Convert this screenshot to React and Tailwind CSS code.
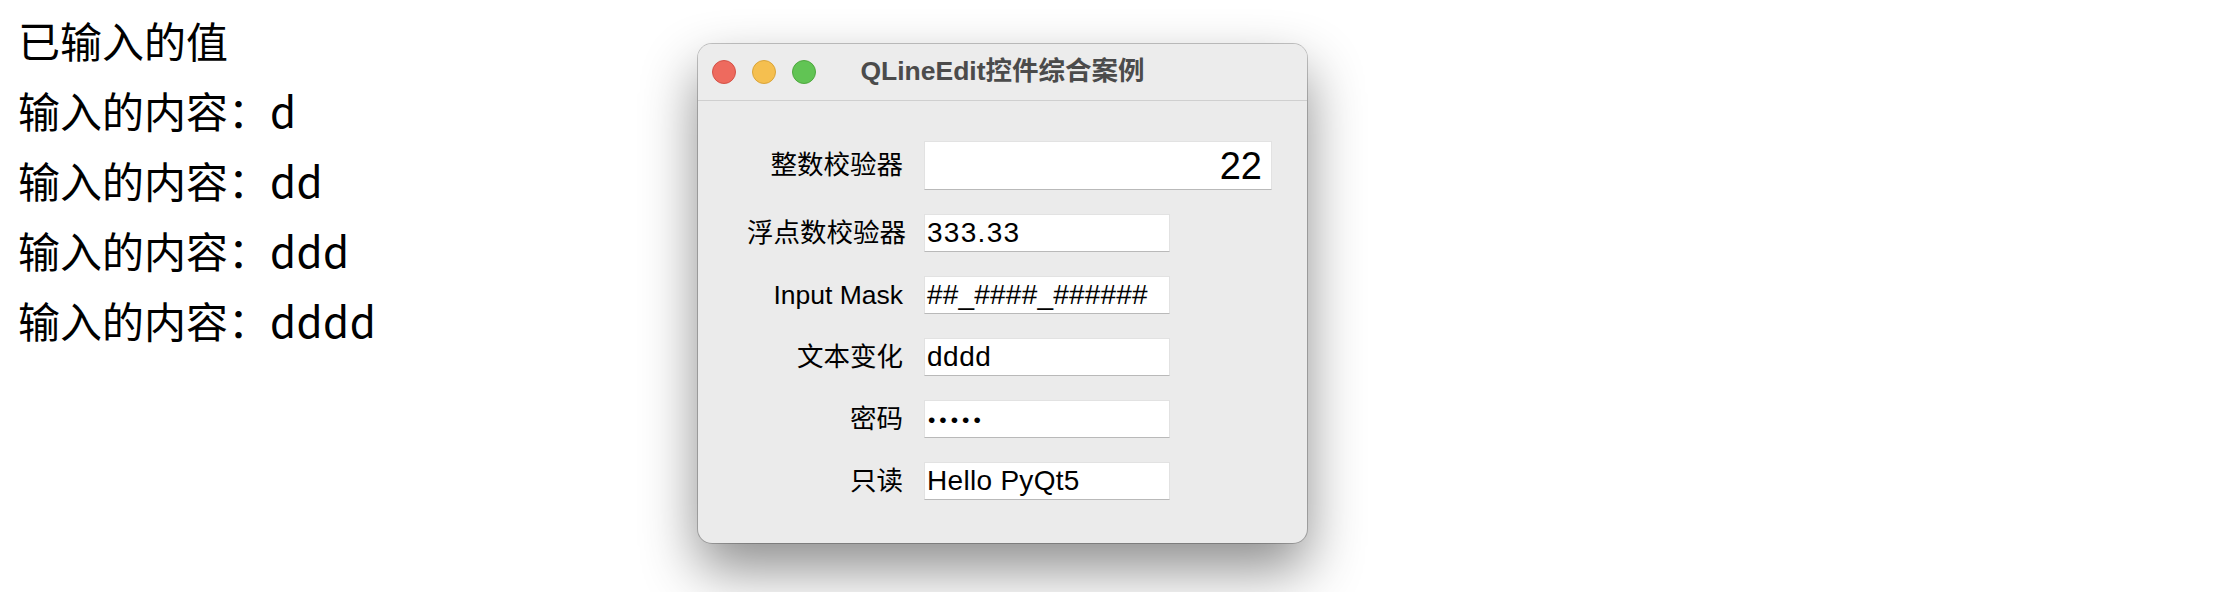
import React from 'react';

const rows = [
  { label: '整数校验器', value: '22', big: true },
  { label: '浮点数校验器', value: '333.33', track: 'tracking-[1.3px]' },
  { label: 'Input Mask', value: '##_####_######', track: 'tracking-[0.2px]' },
  { label: '文本变化', value: 'dddd', track: 'tracking-[0.5px]' },
  { label: '密码', value: '•••••', dots: true },
  { label: '只读', value: 'Hello PyQt5', track: 'tracking-[0.3px]' },
];

const logLines = ['d', 'dd', 'ddd', 'dddd'];

const LineEditDemo = () => {
  return (
    <div className="w-[609px] h-[499px] rounded-[14px] bg-[#ebebeb] shadow-[0_26px_55px_rgba(0,0,0,0.45),0_0_0_1px_rgba(0,0,0,0.22)] flex flex-col overflow-hidden">
      {/* title bar */}
      <div className="h-[57px] shrink-0 border-b border-[#cfcfcf] bg-[#ececec] flex items-center relative">
        <div className="flex items-center gap-[16px] pl-[14px]">
          <span className="w-[24px] h-[24px] rounded-full bg-[#ee6a5e] border border-[#d45247]" />
          <span className="w-[24px] h-[24px] rounded-full bg-[#f5bf4f] border border-[#d9a43a]" />
          <span className="w-[24px] h-[24px] rounded-full bg-[#61c454] border border-[#4fa83f]" />
        </div>
        <div className="absolute inset-0 flex items-center justify-center text-[26.5px] font-bold text-[#4b4b4b] font-['Liberation_Sans','Noto_Sans_CJK_SC',sans-serif] pointer-events-none">
          QLineEdit控件综合案例
        </div>
      </div>

      {/* form */}
      <div className="flex flex-col gap-[24px] pt-[40px] pl-[49px] font-['Liberation_Sans','Noto_Sans_CJK_SC',sans-serif]">
        {rows.map((r) => (
          <div key={r.label} className="flex items-center gap-[21px]">
            <div className="w-[156px] text-right text-[26.5px] text-black leading-none whitespace-nowrap">
              {r.label}
            </div>
            {r.big ? (
              <div className="w-[348px] h-[49px] bg-white border border-[#e2e2e2] border-b-[#b9b9b9] flex items-center justify-end pr-[9px] text-[38px] text-black leading-none">
                {r.value}
              </div>
            ) : r.dots ? (
              <div className="w-[246px] h-[38px] bg-white border border-[#e2e2e2] border-b-[#b9b9b9] flex items-center pl-[3px] text-[21px] tracking-[4px] text-black leading-none">
                {r.value}
              </div>
            ) : (
              <div className={`w-[246px] h-[38px] bg-white border border-[#e2e2e2] border-b-[#b9b9b9] flex items-center pl-[2px] text-[28px] text-black leading-none ${r.track}`}>
                {r.value}
              </div>
            )}
          </div>
        ))}
      </div>
    </div>
  );
};

export default function App() {
  return (
    <div className="w-[2234px] h-[592px] bg-white flex overflow-hidden">
      <div className="w-[698px] shrink-0 pl-[18px] pt-[5px] font-['Noto_Sans_CJK_SC',sans-serif] text-[42px] leading-[70px] text-black">
        <div>已输入的值</div>
        {logLines.map((l) => (
          <div key={l} className="whitespace-nowrap">
            输入的内容：<span className="tracking-[0.5px]">{l}</span>
          </div>
        ))}
      </div>
      <div className="pt-[44px]">
        <LineEditDemo />
      </div>
    </div>
  );
}
